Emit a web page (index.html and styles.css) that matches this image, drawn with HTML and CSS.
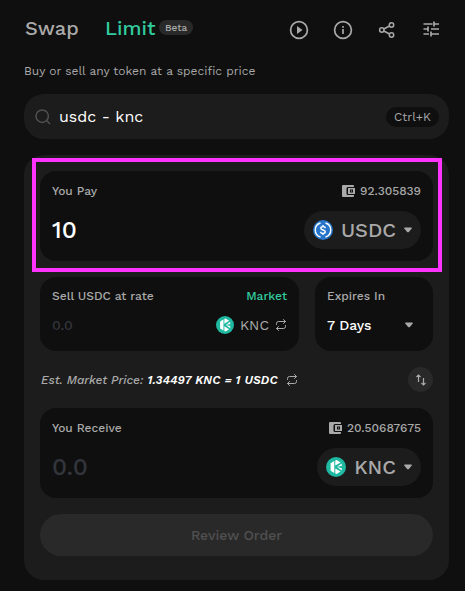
FILE: index.html
```html
<!DOCTYPE html>
<html lang="en">
<head>
    <meta charset="UTF-8">
    <meta name="viewport" content="width=device-width, initial-scale=1.0">
    <title>Limit Order</title>
    <link rel="stylesheet" href="styles.css">
</head>
<body>
    <svg class="sprite">
        <symbol id="wallet" viewBox="0 0 13 12">
            <path fill="currentColor" d="M1 0h10a1 1 0 0 1 1 1v1H6a1.500 1.500 0 0 0-1.500 1.500v5A1.500 1.500 0 0 0 6 10h6v1a1 1 0 0 1-1 1H1a1 1 0 0 1-1-1V1a1 1 0 0 1 1-1z"/>
            <path fill="currentColor" fill-rule="evenodd" d="M6 3h7v6H6zM8 4.500v3h3v-3z"/>
            <rect fill="currentColor" x="9" y="5.500" width="1" height="1"/>
        </symbol>
        <symbol id="knc" viewBox="0 0 20 20">
            <circle cx="10" cy="10" r="10" fill="#1fb8a0"/>
            <path fill="#fff" d="M4.600 6.200L8.300 4v12l-3.700-2.200zM9.300 8.600V3.400l1.300-.5 4 2.500zM15.800 6.500v2.300l-4.900 1.100zM15.800 13.500v-2.300l-4.900-1.100zM9.300 11.400v5.200l1.300.5 4-2.500z"/>
        </symbol>
        <symbol id="repeat" viewBox="0 0 24 24">
            <path fill="none" stroke="currentColor" stroke-width="2" stroke-linecap="round" stroke-linejoin="round" d="M17 1l4 4-4 4M3 11V9a4 4 0 0 1 4-4h14M7 23l-4-4 4-4M21 13v2a4 4 0 0 1-4 4H3"/>
        </symbol>
        <symbol id="caret" viewBox="0 0 8 6">
            <path fill="currentColor" d="M.8.500h6.400q.8 0 .5.900L4.900 4.900q-.9.900-1.800 0L.3 1.400Q0 .5.800.5z"/>
        </symbol>
    </svg>

    <div class="page">
        <div class="header">
            <a class="tab">Swap</a>
            <a class="tab active">Limit</a>
            <span class="beta">Beta</span>
            <div class="actions">
                <svg viewBox="0 0 20 20"><circle cx="10" cy="10" r="8.400"/><path class="fill" d="M8 6v8l5.500-4z"/></svg>
                <svg viewBox="0 0 20 20"><circle cx="10" cy="10" r="8.400"/><path d="M10 9v5M10 6v1.700"/></svg>
                <svg class="share" viewBox="0 0 20 20"><circle cx="4.800" cy="10" r="2.200"/><circle cx="14.500" cy="5" r="2.200"/><circle cx="14.500" cy="15" r="2.200"/><path d="M6.800 9l5.700-3M6.800 11l5.700 3"/></svg>
                <svg viewBox="0 0 20 20"><path d="M2.500 4h9M13 4h5M13 1.500v5M2.500 9H7M10 9h8M7 6.500v5M2.500 14H8M10 14h8M10 11.500v5"/></svg>
            </div>
        </div>

        <p class="subtitle">Buy or sell any token at a specific price</p>

        <div class="search">
            <svg viewBox="0 0 16 16"><circle cx="7.200" cy="7.200" r="6.200"/><path d="M11.800 11.800l3.200 3.200"/></svg>
            <span class="query">usdc - knc</span>
            <span class="shortcut">Ctrl+K</span>
        </div>

        <div class="panel">
            <div class="highlight"></div>
            <div class="card amount">
                <div class="row">
                    <span class="label">You Pay</span>
                    <span class="balance"><svg><use href="#wallet"/></svg><span>92.305839</span></span>
                </div>
                <div class="row main">
                    <span class="value">10</span>
                    <div class="token">
                        <svg class="logo" viewBox="0 0 20 20">
                            <circle cx="10" cy="10" r="10" fill="#2775ca"/>
                            <path fill="none" stroke="#fff" stroke-width="1.400" d="M7.500 3a7.300 7.300 0 0 0 0 14M12.500 3a7.300 7.300 0 0 1 0 14"/>
                            <path fill="none" stroke="#fff" stroke-width="1.400" d="M12.200 8.200c0-1-.9-1.600-2.200-1.600s-2.200.6-2.200 1.600c0 2.400 4.500 1.100 4.500 3.600 0 1-.9 1.700-2.300 1.700s-2.300-.7-2.300-1.700M10 5v1.600M10 13.500V15"/>
                        </svg>
                        <span class="symbol">USDC</span>
                        <svg class="caret"><use href="#caret"/></svg>
                    </div>
                </div>
            </div>

            <div class="columns">
                <div class="card rate">
                    <div class="row">
                        <span class="label">Sell USDC at rate</span>
                        <span class="market">Market</span>
                    </div>
                    <div class="row second">
                        <span class="placeholder">0.0</span>
                        <div class="unit">
                            <svg class="small-logo"><use href="#knc"/></svg>
                            <span>KNC</span>
                            <svg class="repeat"><use href="#repeat"/></svg>
                        </div>
                    </div>
                </div>
                <div class="card expires">
                    <div class="row"><span class="label">Expires In</span></div>
                    <div class="row second">
                        <span class="days">7 Days</span>
                        <svg class="caret"><use href="#caret"/></svg>
                    </div>
                </div>
            </div>

            <div class="price">
                <span class="est">Est. Market Price:</span>
                <span class="quote">1.34497 KNC = 1 USDC</span>
                <svg class="repeat"><use href="#repeat"/></svg>
                <div class="flip">
                    <svg viewBox="0 0 12 14"><path d="M3.500 9V2M1.500 4l2-2 2 2M8.500 5v7M6.500 10l2 2 2-2"/></svg>
                </div>
            </div>

            <div class="card amount">
                <div class="row">
                    <span class="label">You Receive</span>
                    <span class="balance"><svg><use href="#wallet"/></svg><span>20.50687675</span></span>
                </div>
                <div class="row main">
                    <span class="value empty">0.0</span>
                    <div class="token">
                        <svg class="logo"><use href="#knc"/></svg>
                        <span class="symbol">KNC</span>
                        <svg class="caret"><use href="#caret"/></svg>
                    </div>
                </div>
            </div>

            <button class="review">Review Order</button>
        </div>
    </div>
</body>
</html>
```

FILE: styles.css
```css
*{
    margin: 0;
    padding: 0;
    box-sizing: border-box;
}
body{
    background: #0f0f0f;
    color: #a9a9a9;
    font-family: "Work Sans", Inter, "Liberation Sans", sans-serif;
    font-size: 12px;
    font-weight: 500;
    white-space: nowrap;
}
svg{
    display: block;
    flex: none;
}
.sprite{
    position: absolute;
    width: 0;
    height: 0;
}
.page{
    height: 591px;
    padding: 14px 16px 0 24px;
}
.header{
    display: flex;
    align-items: center;
    height: 28px;
}
.tab{
    width: 80px;
    margin-left: 1px;
    font-size: 20px;
}
.tab.active{
    width: 54px;
    margin-left: 0;
    color: #31cb9e;
}
.beta{
    width: 34px;
    height: 15px;
    line-height: 15px;
    margin-top: -2px;
    border-radius: 8px;
    background: #292929;
    font-size: 10px;
    text-align: center;
}
.actions{
    display: flex;
    gap: 24px;
    margin: 4px 0 0 auto;
    padding-right: 8px;
}
.actions svg{
    width: 20px;
    height: 20px;
    fill: none;
    stroke: #a9a9a9;
    stroke-width: 1.7;
}
.actions .share{
    stroke-width: 1.5;
}
.actions .fill{
    fill: #a9a9a9;
    stroke: none;
}
.subtitle{
    margin-top: 21px;
    line-height: 16px;
    font-weight: 400;
}
.search{
    display: flex;
    align-items: center;
    width: 425px;
    height: 45px;
    margin-top: 15px;
    padding: 0 10px 0 11px;
    border-radius: 20px;
    background: #1c1c1c;
}
.search svg{
    width: 16px;
    height: 16px;
    fill: none;
    stroke: #505050;
    stroke-width: 1.5;
}
.query{
    margin-left: 8px;
    color: #fff;
    font-size: 16px;
    font-weight: 400;
}
.shortcut{
    width: 53px;
    height: 20px;
    margin-left: auto;
    line-height: 20px;
    border-radius: 10px;
    background: #0f0f0f;
    text-align: center;
    font-weight: 400;
}
.panel{
    position: relative;
    width: 425px;
    height: 425px;
    margin-top: 16px;
    padding: 16px;
    border-radius: 20px;
    background: #1c1c1c;
}
.highlight{
    position: absolute;
    left: 8px;
    top: 3px;
    width: 410px;
    height: 114px;
    border: 4px solid #ff33ff;
}
.card{
    padding: 12px;
    border-radius: 16px;
    background: #0f0f0f;
}
.amount{
    height: 90px;
}
.row{
    display: flex;
    align-items: center;
    justify-content: space-between;
    height: 16px;
}
.main{
    height: 38px;
    margin-top: 12px;
}
.balance{
    display: flex;
    align-items: center;
    gap: 5px;
}
.balance svg{
    width: 13px;
    height: 12px;
}
.value{
    color: #fff;
    font-size: 24px;
}
.value.empty{
    color: #33353c;
}
.token{
    display: flex;
    align-items: center;
    height: 38px;
    padding: 0 9px;
    border-radius: 19px;
    background: #1c1c1c;
}
.logo{
    width: 20px;
    height: 20px;
}
.symbol{
    margin: 0 8px;
    font-size: 20px;
}
.caret{
    width: 8px;
    height: 6px;
}
.columns{
    display: flex;
    gap: 16px;
    margin-top: 16px;
}
.rate{
    width: 259px;
    height: 74px;
}
.rate,
.expires{
    padding-top: 11px;
}
.expires{
    width: 118px;
}
.market{
    color: #31cb9e;
}
.second{
    height: 20px;
    margin-top: 11px;
}
.placeholder{
    color: #33353c;
    font-size: 14px;
}
.unit{
    display: flex;
    align-items: center;
    font-size: 14px;
    font-weight: 400;
}
.unit span{
    margin: 0 6px;
}
.small-logo{
    width: 18px;
    height: 18px;
}
.repeat{
    width: 12px;
    height: 12px;
}
.days{
    color: #fff;
    font-size: 14px;
}
.expires .caret{
    margin-right: 8px;
}
.price{
    display: flex;
    align-items: center;
    height: 25px;
    margin: 16px 0;
    font-style: italic;
}
.est{
    margin-left: 1px;
}
.quote{
    margin: 0 8px 0 4px;
    color: #fff;
    font-weight: 600;
    letter-spacing: 0.17px;
}
.flip{
    display: flex;
    align-items: center;
    justify-content: center;
    width: 25px;
    height: 25px;
    margin-left: auto;
    border-radius: 50%;
    background: #292929;
}
.flip svg{
    width: 12px;
    height: 14px;
    fill: none;
    stroke: #a9a9a9;
    stroke-width: 1.2;
}
.review{
    display: block;
    width: 100%;
    height: 42px;
    margin-top: 16px;
    border: 0;
    border-radius: 21px;
    background: #292929;
    color: #505050;
    font: inherit;
    font-size: 14px;
}
```
